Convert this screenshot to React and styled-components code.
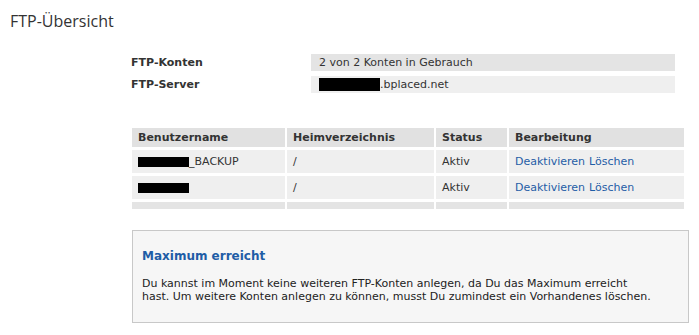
import React from "react";
import styled, { createGlobalStyle } from "styled-components";

const GlobalStyle = createGlobalStyle`
  * {
    box-sizing: border-box;
  }
  body {
    margin: 0;
    background: #ffffff;
    font-family: "DejaVu Sans", Verdana, sans-serif;
    font-size: 11px;
    color: #333333;
  }
`;

const Page = styled.div`
  width: 699px;
  height: 335px;
  overflow: hidden;
`;

const Title = styled.h1`
  margin: 0;
  padding: 10px 0 0 10px;
  font-family: "Open Sans", "Segoe UI", sans-serif;
  font-weight: 400;
  font-size: 16px;
  line-height: 22px;
  color: #333;
`;

const Content = styled.div`
  padding: 22px 0 0 131px;
`;

const InfoGrid = styled.div`
  display: grid;
  grid-template-columns: 180px 364px;
  row-gap: 5px;
`;

const InfoLabel = styled.div`
  font-weight: bold;
  height: 17px;
  line-height: 17px;
`;

const InfoValue = styled.div`
  height: 17px;
  line-height: 17px;
  padding-left: 8px;
  background: ${(p) => (p.$alt ? "#efefef" : "#e4e4e4")};
  display: flex;
  align-items: center;
`;

const Redacted = styled.span`
  display: inline-block;
  width: ${(p) => p.$w}px;
  height: ${(p) => p.$h || 12}px;
  background: #000;
`;

const Table = styled.div`
  margin-top: 35px;
  margin-left: 1px;
  display: grid;
  grid-template-columns: 153px 147px 71px 175px;
  column-gap: 2px;
  row-gap: 3px;
`;

const Head = styled.div`
  background: #e1e1e1;
  font-weight: bold;
  height: 19px;
  line-height: 19px;
  padding-left: 6px;
`;

const Cell = styled.div`
  background: ${(p) => (p.$empty ? "#e4e4e4" : "#efefef")};
  height: ${(p) => (p.$empty ? 7 : 23)}px;
  padding-left: 6px;
  display: flex;
  align-items: center;
`;

const Link = styled.a`
  color: #1f5da6;
  text-decoration: none;
  margin-right: 4px;
`;

const Notice = styled.div`
  margin-top: 21px;
  margin-left: 1px;
  width: 557px;
  height: 93px;
  border: 1px solid #c8c8c8;
  background: #f6f6f6;
  padding: 0 9px;
`;

const NoticeTitle = styled.h2`
  margin: 18px 0 0;
  font-size: 12px;
  line-height: 14px;
  font-weight: bold;
  color: #1f5da6;
`;

const NoticeText = styled.p`
  margin: 14px 0 0;
  line-height: 13px;
  color: #222;
`;

const accounts = [
  { w: 51, suffix: "_BACKUP" },
  { w: 51, suffix: "" },
];

export default function App() {
  return (
    <Page>
      <GlobalStyle />
      <Title>FTP-Übersicht</Title>
      <Content>
        <InfoGrid>
          <InfoLabel>FTP-Konten</InfoLabel>
          <InfoValue>2 von 2 Konten in Gebrauch</InfoValue>
          <InfoLabel>FTP-Server</InfoLabel>
          <InfoValue $alt>
            <Redacted $w={61} $h={13} />
            .bplaced.net
          </InfoValue>
        </InfoGrid>

        <Table>
          <Head>Benutzername</Head>
          <Head>Heimverzeichnis</Head>
          <Head>Status</Head>
          <Head>Bearbeitung</Head>
          {accounts.map((a, i) => (
            <React.Fragment key={i}>
              <Cell>
                <Redacted $w={a.w} $h={10} />
                {a.suffix}
              </Cell>
              <Cell>/</Cell>
              <Cell>Aktiv</Cell>
              <Cell>
                <Link href="#">Deaktivieren</Link>
                <Link href="#">Löschen</Link>
              </Cell>
            </React.Fragment>
          ))}
          <Cell $empty />
          <Cell $empty />
          <Cell $empty />
          <Cell $empty />
        </Table>

        <Notice>
          <NoticeTitle>Maximum erreicht</NoticeTitle>
          <NoticeText>
            Du kannst im Moment keine weiteren FTP-Konten anlegen, da Du das
            Maximum erreicht
            <br />
            hast. Um weitere Konten anlegen zu können, musst Du zumindest ein
            Vorhandenes löschen.
          </NoticeText>
        </Notice>
      </Content>
    </Page>
  );
}
